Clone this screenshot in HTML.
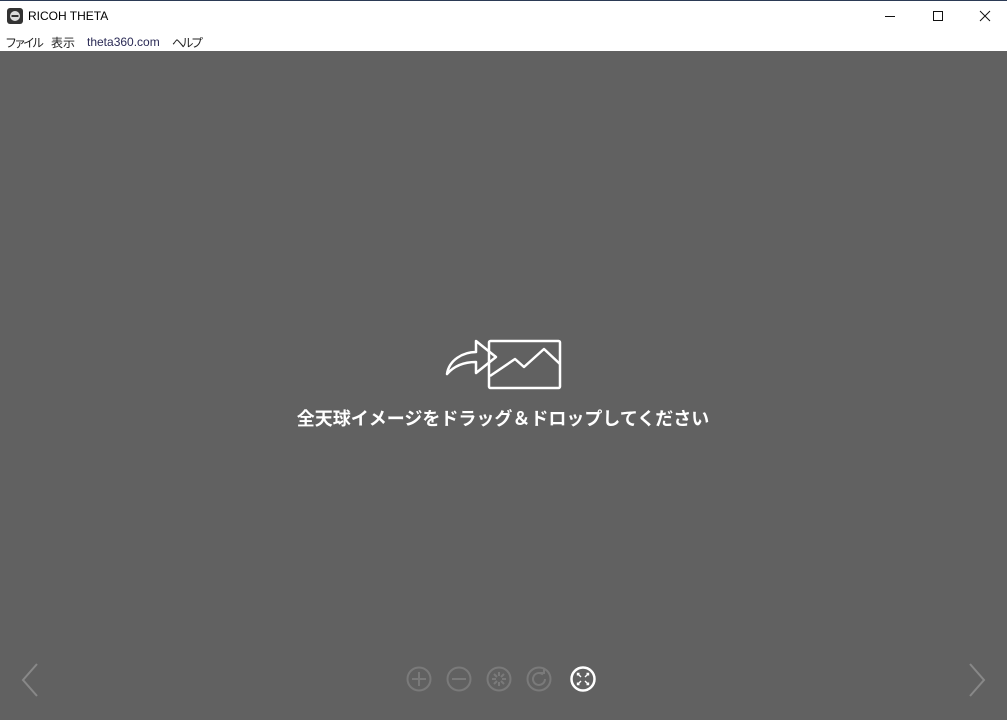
<!DOCTYPE html><html><head><meta charset="utf-8"><style>
body{margin:0;width:1007px;height:720px;overflow:hidden;background:#616161;font-family:"Liberation Sans","Noto Sans CJK JP",sans-serif;position:relative}
#tb{position:absolute;left:0;top:0;width:1007px;height:33px;background:#fff;border-top:1px solid #2b3a55;box-sizing:border-box}
#mb{position:absolute;left:0;top:33px;width:1007px;height:18px;background:#fff;font-size:12px;color:#222}
#mb span{position:absolute;top:1px;white-space:nowrap}
.t{position:absolute;left:293px;top:405px;width:420px;text-align:center;color:#fff;font-weight:bold;font-size:18px;white-space:nowrap}
svg{position:absolute}
</style></head><body>
<div id="tb">
<svg style="left:7px;top:7px" width="16" height="16"><rect width="16" height="16" rx="3" fill="#333"/><circle cx="8" cy="8" r="5" fill="#ddd"/><rect x="4.5" y="7" width="7" height="2" fill="#333"/></svg>
<span style="position:absolute;left:28px;top:8px;font-size:12px;color:#000">RICOH THETA</span>
<svg style="left:880px;top:8px" width="120" height="16" stroke="#111" fill="none" stroke-width="1"><line x1="5" y1="7.5" x2="15" y2="7.5"/><rect x="53.5" y="2.5" width="9" height="9"/><path d="M100 2l10 10M110 2l-10 10"/></svg>
</div>
<div id="mb"><span style="left:5px;letter-spacing:-3px">ファイル</span><span style="left:51px">表示</span><span style="left:87px;top:2px;color:#2a2a55">theta360.com</span><span style="left:172px;letter-spacing:-2.5px">ヘルプ</span></div>
<svg style="left:436px;top:332px" width="134" height="64" fill="none" stroke="#fff" stroke-width="2.5" stroke-linejoin="round"><rect x="53" y="9" width="71" height="47" rx="1.5"/><path d="M54 44l25-17 9 8 20-18 16 15"/><path d="M11 42c2-14 16-22 29-22v-11l20 16-20 16v-11c-12 0-22 4-29 12z"/></svg>
<div class="t">全天球イメージをドラッグ＆ドロップしてください</div>
<svg style="left:15px;top:660px" width="30" height="40" fill="none" stroke="#888" stroke-width="2"><path d="M22 4L8 20l14 16"/></svg>
<svg style="left:962px;top:660px" width="30" height="40" fill="none" stroke="#888" stroke-width="2"><path d="M8 4l14 16L8 36"/></svg>
<svg style="left:400px;top:660px" width="200" height="40" fill="none" stroke="#7a7a7a" stroke-width="2"><circle cx="19" cy="19" r="11.5"/><path d="M12 19h14M19 12v14"/><circle cx="59" cy="19" r="11.5"/><path d="M52 19h14"/><circle cx="99" cy="19" r="11.5"/><path d="M99 12v4M99 22v4M92 19h4M102 19h4M94 14l3 3M101 21l3 3M104 14l-3 3M94 24l3-3"/><circle cx="139" cy="19" r="11.5"/><path d="M145 19a6 6 0 1 1-2-4.5"/><path d="M140 13h4v-4"/><circle cx="183" cy="19" r="11.5" stroke="#fff" stroke-width="2.5"/><path d="M177.5 15.5v-2h2M186.5 13.5h2v2M188.5 22.5v2h-2M179.5 24.5h-2v-2M178 14l3 3M188 14l-3 3M188 24l-3-3M178 24l3-3" stroke="#fff" stroke-width="1.4"/></svg>
</body></html>
